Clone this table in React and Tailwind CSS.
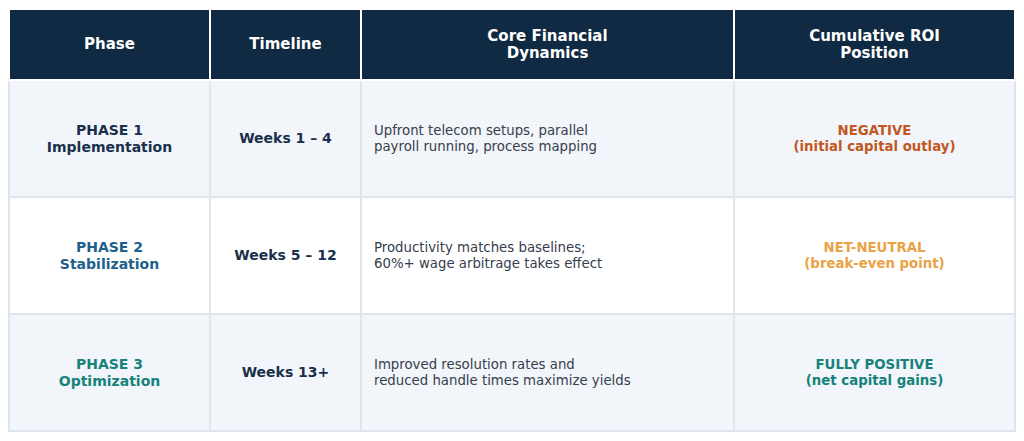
const ROWS = [
  {
    phase: 'PHASE 1',
    name: 'Implementation',
    phaseColor: 'text-[#1a2f4b]',
    timeline: 'Weeks 1 – 4',
    dynamics: ['Upfront telecom setups, parallel', 'payroll running, process mapping'],
    roi: ['NEGATIVE', '(initial capital outlay)'],
    roiColor: 'text-[#c2571f]',
    bg: 'bg-[#f2f6fa]',
  },
  {
    phase: 'PHASE 2',
    name: 'Stabilization',
    phaseColor: 'text-[#1f5f8b]',
    timeline: 'Weeks 5 – 12',
    dynamics: ['Productivity matches baselines;', '60%+ wage arbitrage takes effect'],
    roi: ['NET-NEUTRAL', '(break-even point)'],
    roiColor: 'text-[#eba245]',
    bg: 'bg-white',
  },
  {
    phase: 'PHASE 3',
    name: 'Optimization',
    phaseColor: 'text-[#16827a]',
    timeline: 'Weeks 13+',
    dynamics: ['Improved resolution rates and', 'reduced handle times maximize yields'],
    roi: ['FULLY POSITIVE', '(net capital gains)'],
    roiColor: 'text-[#16827a]',
    bg: 'bg-[#f2f6fa]',
  },
]

export default function App() {
  return (
    <div className="bg-white w-[1024px] h-[441px] pl-[8px] pt-[8px] font-['DejaVu_Sans',sans-serif]">
      <table className="w-[1008px] border-collapse table-fixed">
        <thead>
          <tr className="bg-[#102a43] text-white text-[15px] font-bold leading-[17px]">
            <th className="w-[201px] h-[71px] border-2 border-white">Phase</th>
            <th className="w-[151px] h-[71px] border-2 border-white">Timeline</th>
            <th className="w-[373px] h-[71px] border-2 border-white">Core Financial<br />Dynamics</th>
            <th className="h-[71px] border-2 border-white">Cumulative ROI<br />Position</th>
          </tr>
        </thead>
        <tbody>
          {ROWS.map((r) => (
            <tr key={r.phase} className={r.bg}>
              <td className={`h-[117px] border-2 border-[#dfe5ec] text-center text-[14px] font-bold leading-[17px] ${r.phaseColor}`}>
                {r.phase}<br />{r.name}
              </td>
              <td className="h-[117px] border-2 border-[#dfe5ec] text-center text-[14px] font-bold text-[#1a2f4b]">
                {r.timeline}
              </td>
              <td className="h-[117px] border-2 border-[#dfe5ec] px-3 text-[13.3px] leading-[16px] text-[#36404c]">
                {r.dynamics[0]}<br />{r.dynamics[1]}
              </td>
              <td className={`h-[117px] border-2 border-[#dfe5ec] text-center text-[13.3px] font-bold leading-[16px] ${r.roiColor}`}>
                {r.roi[0]}<br />{r.roi[1]}
              </td>
            </tr>
          ))}
        </tbody>
      </table>
    </div>
  )
}
